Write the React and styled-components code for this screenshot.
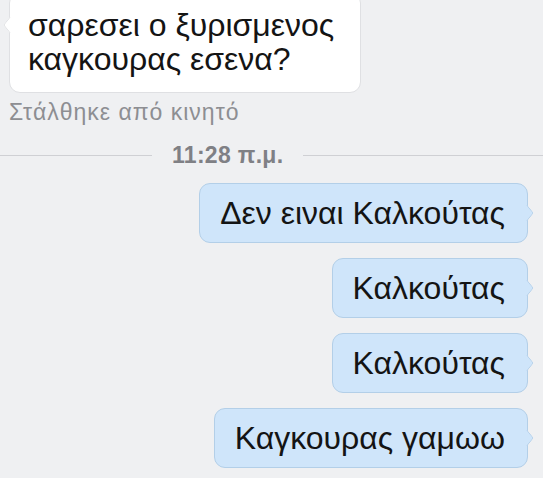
import styled, { createGlobalStyle } from 'styled-components';

const GlobalStyle = createGlobalStyle`
    html, body {
        margin: 0;
        padding: 0;
        background: #eff0f2;
        overflow: hidden;
    }
    body {
        font-family: "Liberation Sans", Arial, sans-serif;
        color: #111;
    }
`;

const Thread = styled.div`
    width: 543px;
    height: 478px;
    display: flex;
    flex-direction: column;
    margin-top: -8px;
`;

const InRow = styled.div`
    display: flex;
    padding-left: 9px;
`;

const Bubble = styled.div`
    position: relative;
    box-sizing: border-box;
    border-radius: 11px;
    font-size: 32px;
    line-height: ${(p) => (p.$out ? '36px' : '34px')};
    color: #141414;
    background: ${(p) => (p.$out ? '#cfe5fa' : '#ffffff')};
    border: 1px solid ${(p) => (p.$out ? '#b3cfe8' : '#dfe0e3')};
    padding: ${(p) => (p.$out ? '11px 22px 11px 20px' : '15px 14px 16px 18px')};
    max-width: ${(p) => (p.$out ? 'none' : '352px')};

    &::after {
        content: '';
        position: absolute;
        top: ${(p) => (p.$out ? '50%' : '32px')};
        ${(p) => (p.$out ? 'right: -6px;' : 'left: -6px;')}
        width: 11px;
        height: 11px;
        margin-top: -6px;
        background: inherit;
        border: 1px solid ${(p) => (p.$out ? '#b3cfe8' : '#dfe0e3')};
        ${(p) => (p.$out ? 'border-left: none; border-bottom: none;' : 'border-right: none; border-top: none;')}
        transform: scaleX(0.8) rotate(45deg);
        border-radius: 0 2px 0 2px;
    }
`;

const Status = styled.div`
    margin: 6px 0 0 9px;
    font-size: 23px;
    line-height: 26px;
    letter-spacing: 1px;
    color: #8d8e92;
`;

const Divider = styled.div`
    display: flex;
    align-items: center;
    gap: 20px;
    margin-top: 17px;
    height: 26px;
`;

const Rule = styled.div`
    height: 1px;
    background: #cfd0d4;
    flex: ${(p) => (p.$grow ? '1' : `0 0 ${p.$w}px`)};
`;

const Stamp = styled.span`
    font-size: 23px;
    line-height: 26px;
    font-weight: 700;
    letter-spacing: 0.3px;
    color: #7f8085;
    white-space: nowrap;
`;

const OutList = styled.div`
    display: flex;
    flex-direction: column;
    align-items: flex-end;
    gap: 15px;
    margin-top: 15px;
    padding-right: 15px;
`;

const messages = ['Δεν ειναι Καλκούτας', 'Καλκούτας', 'Καλκούτας', 'Καγκουρας γαμωω'];

export default function App() {
    return (
        <>
            <GlobalStyle />
            <Thread>
                <InRow>
                    <Bubble>σαρεσει ο ξυρισμενος καγκουρας εσενα?</Bubble>
                </InRow>
                <Status>Στάλθηκε από κινητό</Status>
                <Divider>
                    <Rule $w={152} />
                    <Stamp>11:28 π.μ.</Stamp>
                    <Rule $grow />
                </Divider>
                <OutList>
                    {messages.map((m, i) => (
                        <Bubble $out key={i}>
                            {m}
                        </Bubble>
                    ))}
                </OutList>
            </Thread>
        </>
    );
}
